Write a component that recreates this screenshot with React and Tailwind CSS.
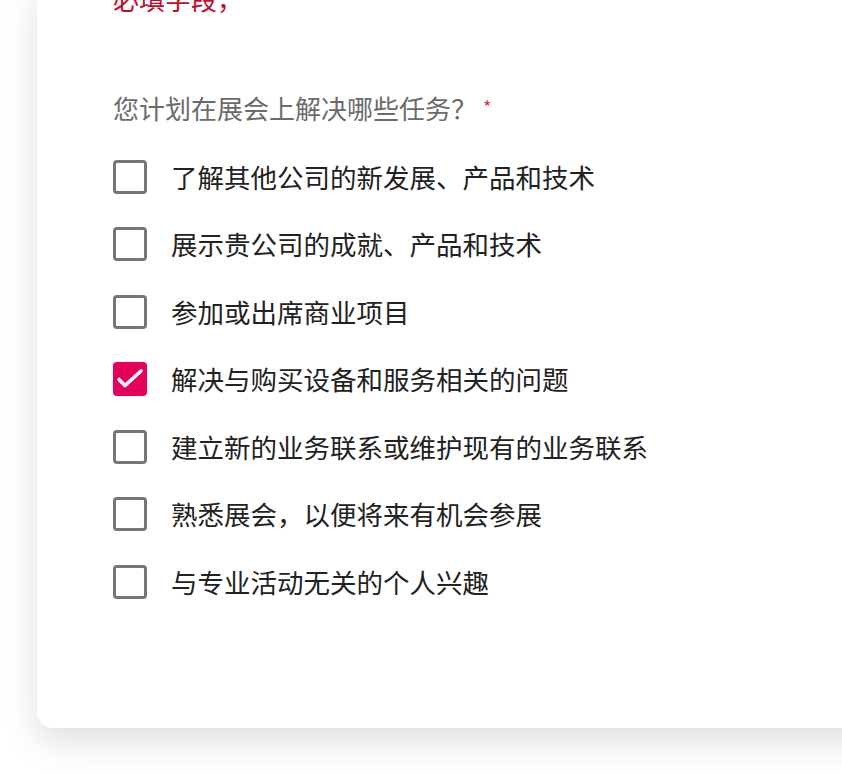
import React from 'react';

const options = [
  { label: '了解其他公司的新发展、产品和技术', checked: false },
  { label: '展示贵公司的成就、产品和技术', checked: false },
  { label: '参加或出席商业项目', checked: false },
  { label: '解决与购买设备和服务相关的问题', checked: true },
  { label: '建立新的业务联系或维护现有的业务联系', checked: false },
  { label: '熟悉展会，以便将来有机会参展', checked: false },
  { label: '与专业活动无关的个人兴趣', checked: false },
];

// Casilla de verificación simple
const Checkbox = ({ checked }) => {
  if (checked) {
    return (
      <span className="flex h-[34px] w-[34px] shrink-0 items-center justify-center rounded-[4px] bg-[#e5005c]">
        <svg width="34" height="34" viewBox="0 0 34 34" fill="none">
          <path d="M6 17.5 L12 23.5 L28 9" stroke="#fff" strokeWidth="3.6" strokeLinecap="round" strokeLinejoin="round" />
        </svg>
      </span>
    );
  }
  return <span className="block h-[34px] w-[34px] shrink-0 rounded-[4px] border-[3px] border-[#767676] bg-white" />;
};

export default function App() {
  return (
    <div
      className="h-[774px] w-[842px] overflow-hidden bg-white pl-[37px]"
      style={{ fontFamily: '"Noto Sans CJK SC", "Noto Sans", sans-serif' }}
    >
      <div className="-mt-[18px] w-[900px] rounded-b-2xl bg-white pb-[112px] pl-[76px] shadow-[0_14px_36px_rgba(0,0,0,0.13)]">
        <div className="h-[34px] text-[26px] leading-[34px] text-[#c20e2d]">必填字段，</div>
        <div className="mt-[76px] flex h-[32px] items-center text-[26px] leading-[32px] text-[#6b6b6b]">
          <span>您计划在展会上解决哪些任务？</span>
          <span className="ml-[6px] -mt-[4px] text-[18px] leading-[22px] text-[#d9363e]">*</span>
        </div>
        <div className="mt-[19px] flex flex-col">
          {options.map((o, i) => (
            <label key={i} className="flex h-[67.5px] items-center">
              <Checkbox checked={o.checked} />
              <span className="ml-[24px] text-[26.5px] leading-[34px] text-[#222]">{o.label}</span>
            </label>
          ))}
        </div>
      </div>
    </div>
  );
}
